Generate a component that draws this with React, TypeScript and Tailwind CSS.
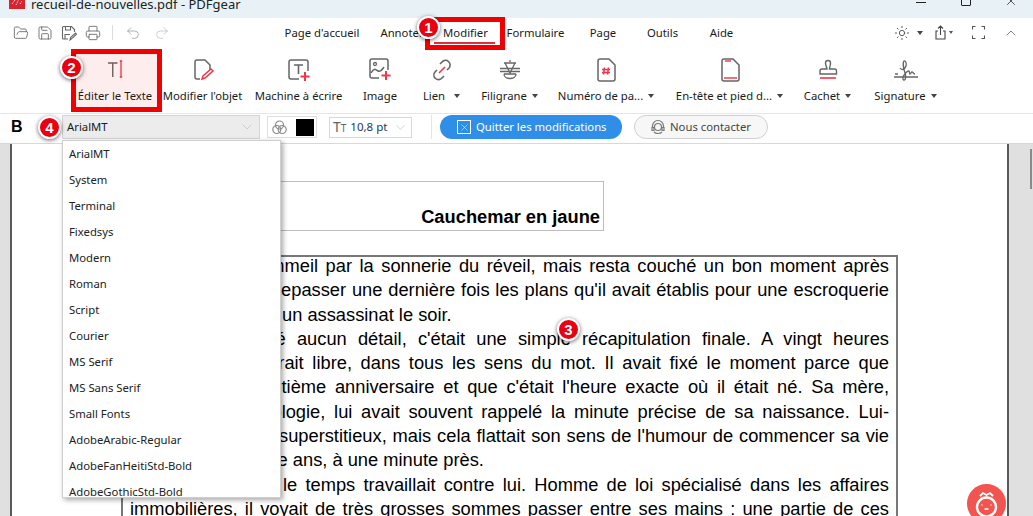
import { ReactNode } from "react";
import { ChevronDown, ChevronUp, FolderOpen, Printer, Redo2, Save, Sun, Undo2, X } from "lucide-react";

const GRAY = "#666666";
const RED = "#f0364a";

// Ribbon icons, all on a 24 box
const TextEditIcon = () => (
  <svg width="24" height="24" viewBox="0 0 24 24" fill="none">
    <path d="M5 5h9.500M9.750 5v14" stroke={GRAY} strokeWidth="1.400" />
    <path d="M18 3v16M16.800 3h2.400M16.800 19h2.400" stroke={RED} strokeWidth="1.300" />
  </svg>
);
const ObjectIcon = () => (
  <svg width="24" height="24" viewBox="0 0 24 24" fill="none">
    <path d="M9 21H6a2 2 0 0 1-2-2V4a2 2 0 0 1 2-2h8l5 5v5" stroke={GRAY} strokeWidth="1.500" />
    <path d="M11 21l1-3 8-7 2 2-8 7z" stroke={RED} strokeWidth="1.500" />
  </svg>
);
const TypewriterIcon = () => (
  <svg width="24" height="24" viewBox="0 0 24 24" fill="none">
    <path d="M12 21H4a2 2 0 0 1-2-2V4a2 2 0 0 1 2-2h15a2 2 0 0 1 2 2v9" stroke={GRAY} strokeWidth="1.500" />
    <path d="M7 7h9M11.500 7v9" stroke={GRAY} strokeWidth="1.600" />
    <path d="M18 14v9M13.500 18.500h9" stroke={RED} strokeWidth="2" />
  </svg>
);
const ImageIcon = () => (
  <svg width="24" height="24" viewBox="0 0 24 24" fill="none">
    <path d="M11 20H4a2 2 0 0 1-2-2V3a2 2 0 0 1 2-2h14a2 2 0 0 1 2 2v9" stroke={GRAY} strokeWidth="1.500" />
    <circle cx="7" cy="6" r="1.500" stroke={GRAY} strokeWidth="1.300" />
    <path d="M3 15c3-6 5-3 7-2s4-1 6-4" stroke={GRAY} strokeWidth="1.500" />
    <path d="M18 13v9M13.500 17.500h9" stroke={RED} strokeWidth="2" />
  </svg>
);
const LinkIcon = () => (
  <svg width="24" height="24" viewBox="0 0 24 24" fill="none">
    <path d="M10 6l2-2a4.500 4.500 0 0 1 7 6l-2 2" stroke={GRAY} strokeWidth="1.600" />
    <path d="M14 18l-2 2a4.500 4.500 0 0 1-7-6l2-2" stroke={GRAY} strokeWidth="1.600" />
    <path d="M9 15l6-6" stroke={RED} strokeWidth="1.600" />
  </svg>
);
const WatermarkIcon = () => (
  <svg width="24" height="24" viewBox="0 0 24 24" fill="none" stroke={GRAY} strokeWidth="1.300">
    <path d="M12 2v2M6 5h12M7 5l5 10 5-10" />
    <path d="M2 10.500h20M2 13.500h20" />
    <path d="M6 16h12M6 16c0 6 12 6 12 0" />
  </svg>
);
const PageNumberIcon = () => (
  <svg width="24" height="24" viewBox="0 0 24 24" fill="none">
    <path d="M6 1h9l6 6v14a2 2 0 0 1-2 2H6a2 2 0 0 1-2-2V3a2 2 0 0 1 2-2z" stroke={GRAY} strokeWidth="1.500" />
    <path d="M10.500 9.500l-1 7M14.500 9.500l-1 7M8 11.500h8M8 14.500h8" stroke={RED} strokeWidth="1.600" />
  </svg>
);
const HeaderFooterIcon = () => (
  <svg width="24" height="24" viewBox="0 0 24 24" fill="none">
    <path d="M6 1h9l6 6v14a2 2 0 0 1-2 2H6a2 2 0 0 1-2-2V3a2 2 0 0 1 2-2z" stroke={GRAY} strokeWidth="1.500" />
    <path d="M7 3h6M6 20h13" stroke="#f5707e" strokeWidth="2" />
  </svg>
);
const StampIcon = () => (
  <svg width="24" height="24" viewBox="0 0 24 24" fill="none">
    <path d="M9.500 5a2.500 2.500 0 0 1 5 0c0 3-1 4-1 6h5a2 2 0 0 1 2 2v3H4v-3a2 2 0 0 1 2-2h5c0-2-1.500-3-1.500-6z" stroke={GRAY} strokeWidth="1.400" />
    <path d="M4 20h16" stroke={RED} strokeWidth="1.600" />
  </svg>
);
const SignatureIcon = () => (
  <svg width="24" height="24" viewBox="0 0 24 24" fill="none" stroke={GRAY} strokeWidth="1.300">
    <path d="M1 16l3 0M0 19h24" />
    <path d="M6 10c2 3 5 1 6-2s-1-6-2-5-1 6 1 12-1 9-2 6 5-9 6-8 0 3 1 3 1-2 2-2 1 2 3 2" />
  </svg>
);

function RibbonItem({ icon, label, cls, caret }: { icon: ReactNode; label: string; cls: string; caret?: string }) {
  return (
    <div className={`flex flex-col items-center h-full pt-[11px] ${cls}`}>
      <div className="h-[24px] flex items-center justify-center">{icon}</div>
      <div className="mt-[6px] flex items-center whitespace-nowrap leading-[16px]">
        {label}
        {caret && (
          <span className={`inline-block w-0 h-0 border-x-[3px] border-x-transparent border-t-[4px] border-t-[#444] ${caret}`} />
        )}
      </div>
    </div>
  );
}

function Badge({ n, cls }: { n: number; cls: string }) {
  return (
    <div className={`absolute z-30 w-[23px] h-[23px] rounded-full bg-[#ea0010] border-2 border-white shadow-[0_1px_4px_rgba(0,0,0,0.6)] flex items-center justify-center text-white text-[15px] font-bold leading-none font-['Liberation_Sans',sans-serif] ${cls}`}>
      {n}
    </div>
  );
}

const menuItems = [
  { label: "Page d'accueil", cls: "w-[94px]" },
  { label: "Annoter", cls: "w-[66px]" },
  { label: "Modifier", cls: "w-[61px]" },
  { label: "Formulaire", cls: "w-[79px]" },
  { label: "Page", cls: "w-[56px]" },
  { label: "Outils", cls: "w-[63px]" },
  { label: "Aide", cls: "w-[55px]" },
];

const fonts = [
  "ArialMT", "System", "Terminal", "Fixedsys", "Modern", "Roman", "Script", "Courier",
  "MS Serif", "MS Sans Serif", "Small Fonts", "AdobeArabic-Regular", "AdobeFanHeitiStd-Bold", "AdobeGothicStd-Bold",
];

// start of each line is hidden behind the font list
const JUSTIFY = "text-justify [text-align-last:justify]";
const lines = [
  { text: "sommeil par la sonnerie du réveil, mais resta couché un bon moment après", cls: `pl-[120px] ${JUSTIFY}` },
  { text: "repasser une dernière fois les plans qu'il avait établis pour une escroquerie", cls: `pl-[145px] ${JUSTIFY}` },
  { text: "un assassinat le soir.", cls: "pl-[152px]" },
  { text: "laissé aucun détail, c'était une simple récapitulation finale. A vingt heures", cls: `pl-[109px] ${JUSTIFY}` },
  { text: "serait libre, dans tous les sens du mot. Il avait fixé le moment parce que", cls: `pl-[129px] ${JUSTIFY}` },
  { text: "trentième anniversaire et que c'était l'heure exacte où il était né. Sa mère,", cls: `pl-[120px] ${JUSTIFY}` },
  { text: "astrologie, lui avait souvent rappelé la minute précise de sa naissance. Lui-", cls: `pl-[111px] ${JUSTIFY}` },
  { text: "superstitieux, mais cela flattait son sens de l'humour de commencer sa vie", cls: `pl-[149px] ${JUSTIFY}` },
  { text: "trente ans, à une minute près.", cls: "pl-[111px]" },
  { text: "le temps travaillait contre lui. Homme de loi spécialisé dans les affaires", cls: `pl-[153px] ${JUSTIFY}` },
  { text: "immobilières, il voyait de très grosses sommes passer entre ses mains : une partie de ces", cls: JUSTIFY },
];

export default function App() {
  return (
    <div className="relative w-[1033px] h-[516px] overflow-hidden bg-white text-[#1a1a1a] text-[11.3px] font-['Noto_Sans',sans-serif]">
      {/* Title bar, cut off at the top */}
      <div className="h-[18px] bg-[#e8f2f6] flex items-start overflow-hidden">
        <svg className="ml-[9px] mt-[-7px]" width="16" height="16" viewBox="0 0 16 16">
          <rect width="16" height="16" fill="#d9232e" />
          <path d="M3 11l3-4M7 12l3-6M11 11l2-3" stroke="white" strokeWidth="1" strokeDasharray="1 1" />
        </svg>
        <div className="ml-[6px] mt-[-5px] text-[13px] leading-[18px] text-[#222]">recueil-de-nouvelles.pdf - PDFgear</div>
        <div className="ml-auto flex items-start text-[#222]">
          <div className="w-[45px] flex justify-center"><div className="mt-[2px] w-[10px] h-px bg-[#222]" /></div>
          <div className="w-[45px] flex justify-center"><div className="mt-[-4px] w-[10px] h-[10px] border border-[#222] rounded-[1px]" /></div>
          <div className="w-[45px] flex justify-center"><X size={14} strokeWidth={1.300} className="mt-[-6px]" /></div>
        </div>
      </div>

      {/* Quick access + tabs */}
      <div className="h-[29px] flex items-center">
        <div className="w-[275px] pl-[9px] flex items-center text-[#666]">
          <div className="w-[24px] flex justify-center"><FolderOpen size={16} strokeWidth={1.300} /></div>
          <div className="w-[24px] flex justify-center"><Save size={16} strokeWidth={1.300} /></div>
          <div className="w-[24px] flex justify-center">
            <svg width="16" height="16" viewBox="0 0 16 16" fill="none" stroke="#666" strokeWidth="1.100">
              <path d="M7 14H2.500a1 1 0 0 1-1-1V2.500a1 1 0 0 1 1-1h8l3 3V7M4.500 1.500v3.500h5v-3.500M4 14V9.500h5" />
              <path d="M9 15l.5-2.500 5-4.500 1 1.200-5 4.600z" />
            </svg>
          </div>
          <div className="w-[24px] flex justify-center"><Printer size={16} strokeWidth={1.300} /></div>
          <div className="ml-[7px] w-px h-[15px] bg-[#dcdcdc]" />
          <div className="ml-[10px] w-[20px] flex justify-center text-[#a0a0a0]"><Undo2 size={16} strokeWidth={1.200} /></div>
          <div className="ml-[9px] w-[20px] flex justify-center text-[#c0c0c0]"><Redo2 size={16} strokeWidth={1.200} /></div>
        </div>
        {menuItems.map((m) => (
          <div key={m.label} className={`pt-[2px] text-center whitespace-nowrap ${m.cls}`}>{m.label}</div>
        ))}
        <div className="ml-auto flex items-center text-[#555]">
          <Sun size={16} strokeWidth={1.400} />
          <span className="ml-[7px] w-0 h-0 border-x-[3px] border-x-transparent border-t-[4px] border-t-[#444]" />
          <svg className="ml-[11px]" width="14" height="15" viewBox="0 0 14 15" fill="none" stroke="#444" strokeWidth="1.100">
            <path d="M4 6H2v8h9V6H9M6.500 10V1M4 3.500L6.500 1 9 3.500" />
          </svg>
          <span className="ml-[1px] w-0 h-0 border-x-[2.500px] border-x-transparent border-t-[3px] border-t-[#555]" />
          <svg className="ml-[19px]" width="13" height="13" viewBox="0 0 13 13" fill="none" stroke="#555" strokeWidth="1.100">
            <path d="M0.500 3.500v-3h3M9.500 0.500h3v3M12.500 9.500v3h-3M3.500 12.500h-3v-3" />
          </svg>
          <ChevronUp className="ml-[18px] mr-[14px]" size={16} strokeWidth={1.100} />
        </div>
      </div>

      {/* Ribbon */}
      <div className="h-[67px] pl-[73px] flex border-b border-[#e6e6e6]">
        <RibbonItem icon={<TextEditIcon />} label="Éditer le Texte" cls="w-[84px]" />
        <RibbonItem icon={<ObjectIcon />} label="Modifier l'objet" cls="w-[91px]" />
        <RibbonItem icon={<TypewriterIcon />} label="Machine à écrire" cls="w-[101px]" />
        <RibbonItem icon={<ImageIcon />} label="Image" cls="w-[62px]" />
        <RibbonItem icon={<LinkIcon />} label="Lien" cls="w-[61px]" caret="ml-[9px]" />
        <RibbonItem icon={<WatermarkIcon />} label="Filigrane" cls="w-[75px]" caret="ml-[5px]" />
        <RibbonItem icon={<PageNumberIcon />} label="Numéro de pa..." cls="w-[118px]" caret="ml-[5px]" />
        <RibbonItem icon={<HeaderFooterIcon />} label="En-tête et pied d..." cls="w-[129px]" caret="ml-[5px]" />
        <RibbonItem icon={<StampIcon />} label="Cachet" cls="w-[67px]" caret="ml-[5px]" />
        <RibbonItem icon={<SignatureIcon />} label="Signature" cls="w-[89px]" caret="ml-[5px]" />
      </div>

      {/* Edit toolbar */}
      <div className="h-[30px] pb-[3px] flex items-center border-b border-[#d8d8d8]">
        <div className="ml-[11px] w-[51px] text-[16px] font-bold font-['Liberation_Sans',sans-serif] text-black leading-none">B</div>
        <div className="w-[198px] h-[24px] pl-[4px] pr-[3px] bg-[#ececec] border border-[#d4d4d4] flex items-center">
          ArialMT
          <ChevronDown className="ml-auto mr-[1px] text-[#bdbdbd]" size={16} strokeWidth={1} />
        </div>
        <div className="ml-[7px] w-[50px] h-[22px] border border-[#dedede] flex items-center">
          <svg className="ml-[4px]" width="15" height="15" viewBox="0 0 15 15" fill="none" stroke="#8a8a8a" strokeWidth="1.200">
            <circle cx="7.500" cy="5" r="4" /><circle cx="4.800" cy="9.500" r="4" /><circle cx="10.200" cy="9.500" r="4" />
          </svg>
          <div className="ml-[9px] w-[18px] h-[17px] bg-black" />
        </div>
        <div className="ml-[12px] w-[83px] h-[21px] border border-[#d8d8d8] flex items-center pl-[3px]">
          <span className="text-[#666] text-[14px] leading-none">T<span className="text-[10px]">T</span></span>
          <span className="ml-[4px] text-[11.500px] text-[#1b3a5c]">10,8 pt</span>
          <ChevronDown className="ml-auto mr-[3px] text-[#bdbdbd]" size={15} strokeWidth={1} />
        </div>
        <div className="ml-[19px] w-px h-[24px] bg-[#e4e4e4]" />
        <div className="ml-[8px] w-[182px] h-[24px] rounded-full bg-[#2f8fe8] text-white flex items-center pl-[17px]">
          <span className="w-[14px] h-[14px] border border-white flex items-center justify-center">
            <X size={11} strokeWidth={1.200} />
          </span>
          <span className="ml-[5px]">Quitter les modifications</span>
        </div>
        <div className="ml-[12px] w-[134px] h-[24px] rounded-full bg-[#f7f7f7] border border-[#d0d0d0] flex items-center pl-[15px] text-[#444]">
          <svg width="16" height="16" viewBox="0 0 16 16" fill="none" stroke="#777" strokeWidth="1.200">
            <path d="M2.500 9V7a5.500 5.500 0 0 1 11 0v2" /><circle cx="8" cy="8" r="3.500" />
            <path d="M2 8.500h2v3H2zM12 8.500h2v3h-2zM4 13c2 2 6 2 8 0" />
          </svg>
          <span className="ml-[4px]">Nous contacter</span>
        </div>
      </div>

      {/* Document area */}
      <div className="h-[372px] bg-[#e0e0e0] pl-[10px] flex overflow-hidden">
        <div className="w-[999px] h-full bg-white border-x-2 border-[#5a5a5a] font-['Liberation_Sans',sans-serif] text-black">
          <div className="ml-[109px] mt-[37px] w-[483px] h-[50px] border border-[#bdbdbd] flex items-end justify-end pr-[3px] pb-px text-[18.300px] font-bold leading-[24px]">
            Cauchemar en jaune
          </div>
          <div className="ml-[109px] mt-[24px] w-[777px] h-[300px] border-2 border-[#777] border-b-0 px-[7px] text-[18.300px] leading-[24.300px]">
            <div className="-mt-[3px]">
              {lines.map((l) => (
                <div key={l.text} className={`whitespace-nowrap ${l.cls}`}>{l.text}</div>
              ))}
            </div>
          </div>
        </div>
        <div className="ml-[21px] mt-[5px] w-[2px] h-[40px] bg-[#8a8a8a]" />
      </div>

      {/* Font list, open over the page */}
      <div className="absolute z-20 left-[62px] top-[140px] w-[219px] h-[358px] bg-white border border-[#cfcfcf] shadow-[2px_2px_5px_rgba(0,0,0,0.35)] overflow-hidden pl-[6px]">
        {fonts.map((f) => (
          <div key={f} className="h-[26px] flex items-center text-[#222] whitespace-nowrap">{f}</div>
        ))}
      </div>

      {/* Callouts from the tutorial */}
      <div className="absolute z-10 left-[425px] top-[17px] w-[80px] h-[33px] border-[5px] border-[#f00000]" />
      <div className="absolute z-10 left-[434px] top-[42px] w-[61px] h-[2px] bg-[#e0303f]" />
      <div className="absolute z-10 left-[71px] top-[49px] w-[91px] h-[63px] border-[5px] border-[#f00000] bg-[#f0000012]" />
      <Badge n={1} cls="left-[417px] top-[16px]" />
      <Badge n={2} cls="left-[60px] top-[56px]" />
      <Badge n={3} cls="left-[557px] top-[318px]" />
      <Badge n={4} cls="left-[38px] top-[116px]" />

      {/* Help mascot */}
      <div className="absolute z-10 left-[967px] top-[484px] w-[39px] h-[39px] rounded-full bg-[#f2554f]">
        <svg width="39" height="39" viewBox="0 0 39 39" fill="none" stroke="white">
          <path d="M13 12l3-3 3.500 2 3.500-2 3 3" strokeWidth="1.800" />
          <circle cx="19.500" cy="23" r="9.500" strokeWidth="2.400" />
          <path d="M17.500 25h4M14.500 21h1M23.500 21h1" strokeWidth="1.600" />
        </svg>
      </div>
    </div>
  );
}
